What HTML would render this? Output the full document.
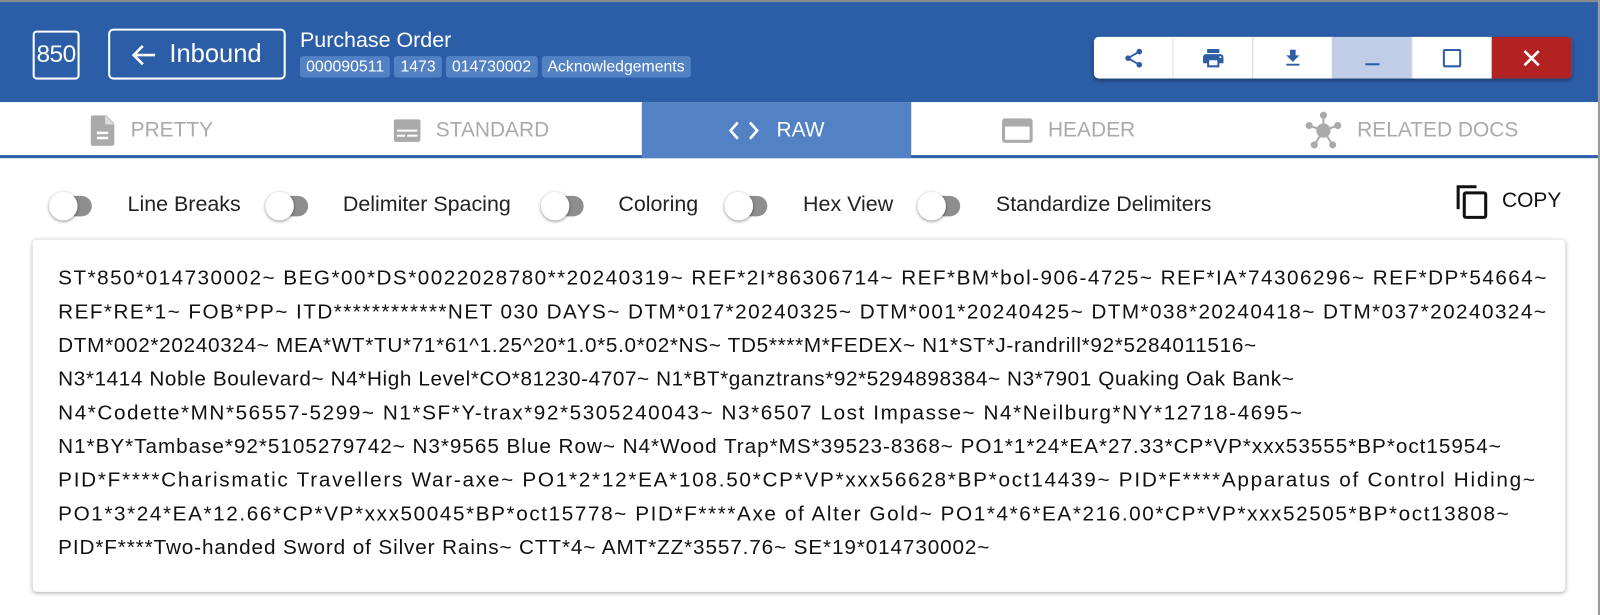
<!DOCTYPE html>
<html><head><meta charset="utf-8"><style>
*{box-sizing:border-box;margin:0;padding:0}
html,body{width:1600px;height:615px;overflow:hidden}
body{background:#fff;font-family:"Liberation Sans",Arial,sans-serif;position:relative}
#w{position:absolute;left:0;top:0;width:1568px;height:603px;transform:scale(1.0204);transform-origin:0 0;overflow:hidden}
.topline{position:absolute;left:0;top:0;width:1568px;height:2px;background:#8a8a8a}
.rline{position:absolute;right:0;top:0;width:2px;height:603px;background:#9a9a9a}
.hdr{position:absolute;left:0;top:2px;width:1566px;height:98px;background:#2c5ea8}
.b850{position:absolute;left:32px;top:28px;width:46px;height:48px;border:2px solid #fff;border-radius:4px;color:#fff;font-size:24px;line-height:44px;text-align:center;letter-spacing:-0.5px}
.inb{position:absolute;left:106px;top:26px;width:174px;height:50px;border:2px solid #fff;border-radius:5px;color:#fff;font-size:25px;line-height:46px}
.inb svg{position:absolute;left:20px;top:12px}
.inb span{position:absolute;left:58px;top:0}
.title{position:absolute;left:294px;top:26px;color:#fff;font-size:21px}
.tags{position:absolute;left:294px;top:53px;display:flex;gap:4px}
.tags span{background:#5281c4;color:#fff;font-size:15.5px;height:21px;line-height:21px;padding:0 6px;border-radius:3px}
.btns{position:absolute;left:1072px;top:34px;width:469px;height:41px;border-radius:5px;overflow:hidden;display:flex;box-shadow:0 2px 4px rgba(0,0,0,.35)}
.btns div{width:78px;height:41px;background:#fff;border-right:1px solid #ddd;display:flex;align-items:center;justify-content:center}
.tabs{position:absolute;left:0;top:100px;width:1566px;height:55px;border-bottom:3px solid #2c5ea8}
.tab{position:absolute;top:0;height:55px;display:flex;align-items:center;color:#aaa;font-size:20.5px;gap:14px}
.tgl{position:absolute;top:188px}
.tgl .tr{position:absolute;left:10px;top:4px;width:32px;height:20px;border-radius:10px;background:#8e8e8e}
.tgl .th{position:absolute;left:0;top:0;width:28px;height:28px;border-radius:50%;background:#fff;box-shadow:0 1px 3px rgba(0,0,0,.45)}
.lbl{position:absolute;top:189px;font-size:21px;color:#222}
.card{position:absolute;left:32px;top:235px;width:1502px;height:345px;border-radius:4px;box-shadow:0 1px 4px rgba(0,0,0,.35);background:#fff}
.txt{position:absolute;left:57px;top:257px;width:1500px;font-size:20.3px;line-height:33px;color:#111}
.txt div{height:33px;white-space:pre}
</style></head><body><div id="w">
<div class="topline"></div>
<div class="hdr">
<div class="b850">850</div>
<div class="inb"><svg width="26" height="24" viewBox="0 0 26 24"><path d="M24 12H4M12 3L3 12l9 9" stroke="#fff" stroke-width="2.6" fill="none"/></svg><span>Inbound</span></div>
<div class="title">Purchase Order</div>
<div class="tags"><span>000090511</span><span>1473</span><span>014730002</span><span>Acknowledgements</span></div>
<div class="btns">
<div><svg width="22" height="24" viewBox="0 0 24 24"><circle cx="18" cy="5" r="3" fill="#2c5ea8"/><circle cx="6" cy="12" r="3" fill="#2c5ea8"/><circle cx="18" cy="19" r="3" fill="#2c5ea8"/><path d="M18 5L6 12l12 7" stroke="#2c5ea8" stroke-width="2" fill="none"/></svg></div>
<div><svg width="24" height="24" viewBox="0 0 24 24"><path fill="#2c5ea8" d="M19 8H5c-1.7 0-3 1.3-3 3v6h4v4h12v-4h4v-6c0-1.7-1.3-3-3-3zm-3 11H8v-5h8v5zm3-7c-.6 0-1-.4-1-1s.4-1 1-1 1 .4 1 1-.4 1-1 1zm-1-9H6v4h12V3z"/></svg></div>
<div><svg width="22" height="24" viewBox="0 0 24 24"><path fill="#2c5ea8" d="M19 9h-4V3H9v6H5l7 7 7-7zM5 18v2h14v-2H5z"/></svg></div>
<div style="background:#bfcde6"><div style="width:14px;height:2px;background:#2c5ea8;margin-top:12px;border:0"></div></div>
<div><div style="width:18px;height:18px;border:2.5px solid #2c5ea8;border-radius:2px"></div></div>
<div style="background:#b22222;border:0;width:78px"><svg width="18" height="18" viewBox="0 0 18 18"><path d="M2 2l14 14M16 2L2 16" stroke="#fff" stroke-width="2.6"/></svg></div>
</div>
</div>
<div class="tabs">
<div class="tab" style="left:88px"><svg width="26" height="30" viewBox="0 0 26 30"><path fill="#aaa" d="M3 0h13l8 8v20c0 1-1 2-2 2H3c-1 0-2-1-2-2V2c0-1 1-2 2-2z"/><rect x="7" y="16" width="11" height="2.5" fill="#fff"/><rect x="7" y="21" width="11" height="2.5" fill="#fff"/><path d="M15 0v9h9" fill="#ddd"/></svg>PRETTY</div>
<div class="tab" style="left:385px"><svg width="28" height="24" viewBox="0 0 28 24"><rect x="1" y="1" width="26" height="22" rx="2" fill="#aaa"/><rect x="4" y="11" width="20" height="2" fill="#fff"/><rect x="4" y="16" width="8" height="2" fill="#fff"/><rect x="14" y="16" width="10" height="2" fill="#fff"/></svg>STANDARD</div>
<div style="position:absolute;left:629px;top:0;width:264px;height:55px;background:#5281c4"></div>
<div class="tab" style="left:713px;color:#fff;gap:16px"><svg width="32" height="20" viewBox="0 0 32 20"><path d="M10 2L3 10l7 8M22 2l7 8-7 8" stroke="#fff" stroke-width="2.6" fill="none"/></svg>RAW</div>
<div class="tab" style="left:981px"><svg width="32" height="26" viewBox="0 0 32 26"><rect x="1" y="1" width="30" height="24" rx="3" fill="#aaa"/><rect x="4" y="9" width="24" height="13" fill="#fff"/></svg>HEADER</div>
<div class="tab" style="left:1278px"><svg width="38" height="38" viewBox="0 0 38 38"><g stroke="#aaa" stroke-width="2"><path d="M19 19L19 4M19 19L5 14M19 19L33 14M19 19L10 33M19 19L28 33"/></g><g fill="#aaa"><circle cx="19" cy="19" r="7"/><circle cx="19" cy="4" r="3.5"/><circle cx="5" cy="14" r="3.5"/><circle cx="33" cy="14" r="3.5"/><circle cx="10" cy="33" r="3.5"/><circle cx="28" cy="33" r="3.5"/></g></svg>RELATED DOCS</div>
</div>
<div class="tgl" style="left:48px"><div class="tr"></div><div class="th"></div></div><div class="lbl" style="left:125px">Line Breaks</div>
<div class="tgl" style="left:260px"><div class="tr"></div><div class="th"></div></div><div class="lbl" style="left:336px">Delimiter Spacing</div>
<div class="tgl" style="left:530px"><div class="tr"></div><div class="th"></div></div><div class="lbl" style="left:606px">Coloring</div>
<div class="tgl" style="left:710px"><div class="tr"></div><div class="th"></div></div><div class="lbl" style="left:787px">Hex View</div>
<div class="tgl" style="left:899px"><div class="tr"></div><div class="th"></div></div><div class="lbl" style="left:976px">Standardize Delimiters</div>
<svg style="position:absolute;left:1427px;top:181px" width="32" height="34" viewBox="0 0 32 34"><path d="M2 24V2h18" stroke="#111" stroke-width="3" fill="none"/><rect x="8" y="8" width="21" height="24" rx="1.5" stroke="#111" stroke-width="3" fill="none"/></svg>
<div style="position:absolute;left:1472px;top:185px;font-size:20.5px;color:#111">COPY</div>
<div class="card"></div>
<div class="txt"><div style="letter-spacing:1.45px">ST*850*014730002~ BEG*00*DS*0022028780**20240319~ REF*2I*86306714~ REF*BM*bol-906-4725~ REF*IA*74306296~ REF*DP*54664~</div><div style="letter-spacing:1.43px">REF*RE*1~ FOB*PP~ ITD************NET 030 DAYS~ DTM*017*20240325~ DTM*001*20240425~ DTM*038*20240418~ DTM*037*20240324~</div><div style="letter-spacing:0.68px">DTM*002*20240324~ MEA*WT*TU*71*61^1.25^20*1.0*5.0*02*NS~ TD5****M*FEDEX~ N1*ST*J-randrill*92*5284011516~</div><div style="letter-spacing:0.6px">N3*1414 Noble Boulevard~ N4*High Level*CO*81230-4707~ N1*BT*ganztrans*92*5294898384~ N3*7901 Quaking Oak Bank~</div><div style="letter-spacing:1.55px">N4*Codette*MN*56557-5299~ N1*SF*Y-trax*92*5305240043~ N3*6507 Lost Impasse~ N4*Neilburg*NY*12718-4695~</div><div style="letter-spacing:0.95px">N1*BY*Tambase*92*5105279742~ N3*9565 Blue Row~ N4*Wood Trap*MS*39523-8368~ PO1*1*24*EA*27.33*CP*VP*xxx53555*BP*oct15954~</div><div style="letter-spacing:1.7px">PID*F****Charismatic Travellers War-axe~ PO1*2*12*EA*108.50*CP*VP*xxx56628*BP*oct14439~ PID*F****Apparatus of Control Hiding~</div><div style="letter-spacing:1.57px">PO1*3*24*EA*12.66*CP*VP*xxx50045*BP*oct15778~ PID*F****Axe of Alter Gold~ PO1*4*6*EA*216.00*CP*VP*xxx52505*BP*oct13808~</div><div style="letter-spacing:0.87px">PID*F****Two-handed Sword of Silver Rains~ CTT*4~ AMT*ZZ*3557.76~ SE*19*014730002~</div></div>
<div class="rline"></div>
</div></body></html>
